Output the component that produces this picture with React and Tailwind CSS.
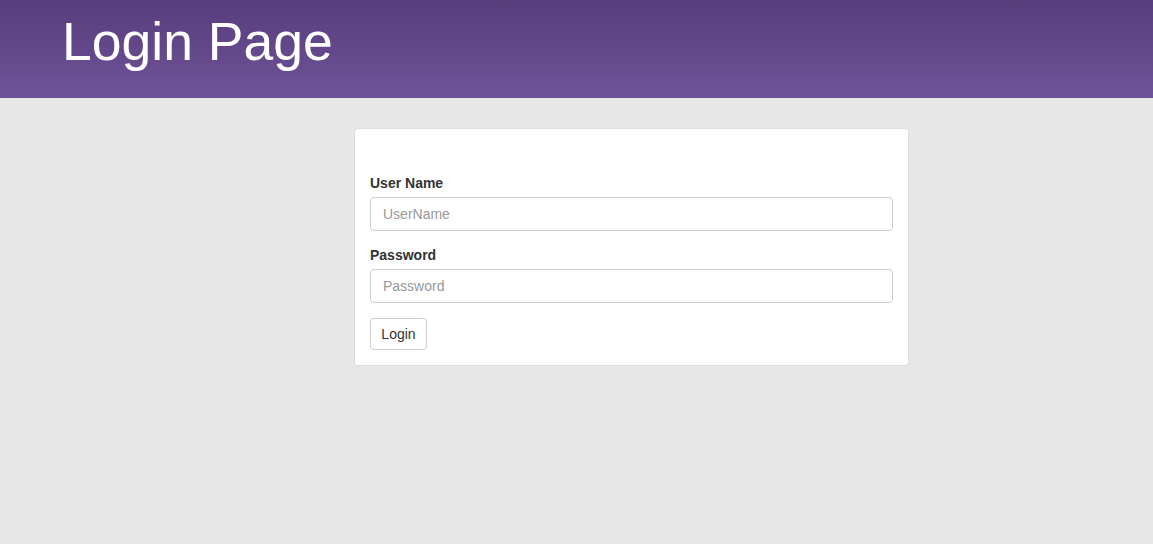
import React from 'react';

export default function App() {
  return (
    <div className="min-h-screen bg-[#e7e7e7] font-['Liberation_Sans',Arial,sans-serif] text-[#333]">
      {/* Header */}
      <div className="h-[98px] bg-gradient-to-b from-[#563d7c] to-[#6f5499] pl-[62px] pt-[15px]">
        <h1 className="text-[53.5px] leading-[54px] text-white">Login Page</h1>
      </div>

      {/* Login panel */}
      <div className="pt-[30px]">
        <div className="ml-[354px] w-[555px] rounded-[4px] border border-[#dddddd] bg-white px-[15px] pt-[44px] pb-[15px]">
          <form onSubmit={(e) => e.preventDefault()}>
            <label className="mb-[4px] block text-[14px] font-bold leading-5">User Name</label>
            <input
              type="text"
              placeholder="UserName"
              className="block h-[34px] w-full rounded-[4px] border border-[#cccccc] px-[12px] text-[14px] text-[#555] placeholder:text-[#999] focus:outline-none"
            />

            <label className="mt-[14px] mb-[4px] block text-[14px] font-bold leading-5">Password</label>
            <input
              type="password"
              placeholder="Password"
              className="block h-[34px] w-full rounded-[4px] border border-[#cccccc] px-[12px] text-[14px] text-[#555] placeholder:text-[#999] focus:outline-none"
            />

            <button
              type="submit"
              className="mt-[15px] block h-[32px] w-[57px] rounded-[4px] border border-[#cccccc] bg-white text-[14px] text-[#333]"
            >
              Login
            </button>
          </form>
        </div>
      </div>
    </div>
  );
}
